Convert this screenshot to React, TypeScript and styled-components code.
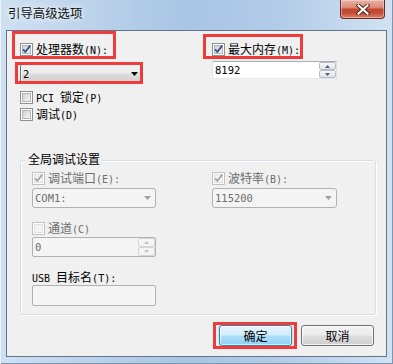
import React, { useId } from 'react';
import styled, { createGlobalStyle } from 'styled-components';

const Global = createGlobalStyle`
  html, body { margin: 0; padding: 0; background: #fff; }
  body { font-family: "Noto Sans CJK SC", "Noto Sans", sans-serif; font-size: 12px; line-height: 13px; color: #000; }
  *, *::before, *::after { box-sizing: border-box; }
`;

const Window = styled.div`
  width: 393px;
  height: 364px;
  display: flex;
  flex-direction: column;
  padding: 0 6px 7px 6px;
  background: linear-gradient(90deg, #cfe0f2 0%, #bcd3eb 22%, #a8c5e4 48%, #b3cce8 72%, #d2e2f3 100%);
  box-shadow: inset 1px 0 0 #eaf2fa, inset -1px 0 0 #7d95b0, inset 0 -1px 0 #7d95b0;
`;

const TitleBar = styled.div`
  height: 30px;
  flex: none;
  display: flex;
  align-items: flex-start;
`;

const TitleText = styled.div`
  margin: 6px 0 0 2px;
  font-size: 12.4px;
  line-height: 14px;
  color: #111;
  text-shadow: 0 0 6px rgba(255, 255, 255, 0.9), 0 0 10px rgba(255, 255, 255, 0.7);
`;

const CloseButton = styled.div`
  width: 45px;
  height: 19px;
  margin: 0 2px 0 auto;
  display: flex;
  align-items: center;
  justify-content: center;
  border: 1px solid #6e2b24;
  border-top: none;
  border-radius: 0 0 4px 4px;
  background: linear-gradient(#eab0a2 0%, #dc8f7e 40%, #c5492f 52%, #c44d35 72%, #dd8368 100%);
  box-shadow: inset 0 0 0 1px rgba(255, 255, 255, 0.35);
`;

const Client = styled.div`
  flex: 1;
  display: flex;
  flex-direction: column;
  border: 1px solid #62758b;
  background: #f0f0f0;
  padding: 12px 0 0 13px;
`;

const Columns = styled.div<{ $left: number }>`
  display: grid;
  grid-template-columns: ${(p) => p.$left}px 1fr;
  align-items: start;
`;

const Column = styled.div`
  display: flex;
  flex-direction: column;
  align-items: flex-start;
`;

const Spaced = styled.div<{ $mt: number }>`
  margin-top: ${(p) => p.$mt}px;
`;

const Marked = styled.div<{ $x: number; $y: number; $w: number; $h: number }>`
  position: relative;
  &::after {
    content: '';
    box-sizing: border-box;
    position: absolute;
    left: ${(p) => p.$x}px;
    top: ${(p) => p.$y}px;
    width: ${(p) => p.$w}px;
    height: ${(p) => p.$h}px;
    border: 3px solid #f03b3b;
    pointer-events: none;
  }
`;

const CheckRow = styled.label`
  display: flex;
  align-items: center;
  gap: 3px;
  height: 13px;
`;

const LabelText = styled.span<{ $disabled?: boolean }>`
  font-size: 12px;
  line-height: 13px;
  white-space: nowrap;
  color: ${(p) => (p.$disabled ? '#6d6d6d' : '#000')};
`;

const FieldLabel = styled.div`
  height: 13px;
  font-size: 12px;
  line-height: 13px;
  white-space: nowrap;
`;

const Latin = styled.span`
  font-family: "DejaVu Sans Mono", "Liberation Mono", monospace;
  font-size: 10px;
`;

const DropButton = styled.div`
  width: 123px;
  height: 21px;
  display: flex;
  align-items: center;
  justify-content: space-between;
  padding: 0 4px 0 2px;
  border: 1px solid #707070;
  border-radius: 3px;
  background: linear-gradient(#f3f3f3 0%, #ebebeb 48%, #dcdcdc 52%, #cfcfcf 100%);
  box-shadow: inset 0 0 0 1px rgba(255, 255, 255, 0.75);
`;

const DropDisabled = styled.div<{ $w: number }>`
  width: ${(p) => p.$w}px;
  height: 20px;
  display: flex;
  align-items: center;
  justify-content: space-between;
  padding: 0 4px 0 2px;
  border: 1px solid #adb2b5;
  border-radius: 3px;
  background: #f4f4f4;
`;

const Value = styled.span<{ $disabled?: boolean }>`
  font-family: "DejaVu Sans Mono", "Liberation Mono", monospace;
  font-size: 10.5px;
  line-height: 14px;
  color: ${(p) => (p.$disabled ? '#6d6d6d' : '#000')};
`;

const SpinBox = styled.div<{ $w: number; $h: number; $disabled?: boolean }>`
  width: ${(p) => p.$w}px;
  height: ${(p) => p.$h}px;
  display: flex;
  align-items: stretch;
  border: 1px solid;
  border-color: ${(p) => (p.$disabled ? '#adb2b5' : '#abadb3 #dbdfe6 #e3e9ef #e2e3ea')};
  border-radius: ${(p) => (p.$disabled ? '2px' : '0')};
  background: ${(p) => (p.$disabled ? '#f4f4f4' : '#fff')};
`;

const SpinValue = styled.div`
  flex: 1;
  display: flex;
  align-items: center;
  padding-left: 2px;
`;

const SpinButtons = styled.div`
  width: 17px;
  display: flex;
  flex-direction: column;
`;

const SpinBtn = styled.div<{ $disabled?: boolean }>`
  flex: 1;
  display: flex;
  align-items: center;
  justify-content: center;
  border: 1px solid ${(p) => (p.$disabled ? '#d6d6d6' : '#b7bcc4')};
  border-radius: 2px;
  background: ${(p) =>
    p.$disabled ? '#f4f4f4' : 'linear-gradient(#f7f7f7 0%, #ebedf0 50%, #dfe2e6 100%)'};
`;

const TextBox = styled.div`
  width: 124px;
  height: 21px;
  border: 1px solid #adb2b5;
  border-radius: 2px;
  background: #f4f4f4;
`;

const GroupBox = styled.div`
  margin: 39px 10px 0 0;
  border: 1px solid #d5dfe5;
  border-radius: 3px;
  box-shadow: inset 1px 1px 0 #fff, 1px 1px 0 #fff;
  padding: 0 0 8px 0;
`;

const GroupTitle = styled.div`
  width: fit-content;
  margin: -9px 0 0 5px;
  padding: 0 2px;
  background: #f0f0f0;
  font-size: 12px;
  line-height: 14px;
`;

const GroupBody = styled.div`
  margin: 6px 0 0 11px;
`;

const ButtonRow = styled.div`
  margin-top: 10px;
  padding-right: 12px;
  display: flex;
  justify-content: flex-end;
  gap: 9px;
`;

const Button = styled.div<{ $primary?: boolean }>`
  width: 73px;
  height: 21px;
  display: flex;
  align-items: center;
  justify-content: center;
  font-size: 12px;
  border-radius: 3px;
  border: 1px solid ${(p) => (p.$primary ? '#3c7fb1' : '#707070')};
  background: ${(p) =>
    p.$primary
      ? 'linear-gradient(#e6f5fd 0%, #d0ecfb 48%, #ade0f8 52%, #8fd0f1 100%)'
      : 'linear-gradient(#f3f3f3 0%, #ebebeb 48%, #dddddd 52%, #cfcfcf 100%)'};
  box-shadow: ${(p) =>
    p.$primary
      ? 'inset 0 0 0 1px rgba(255,255,255,0.6), 0 0 2px rgba(60,160,220,0.6)'
      : 'inset 0 0 0 1px rgba(255,255,255,0.75)'};
`;

function CheckBox({ checked, disabled }: { checked?: boolean; disabled?: boolean }) {
  const id = useId().replace(/:/g, '');
  return (
    <svg width="13" height="13" viewBox="0 0 13 13" style={{ flex: 'none' }}>
      <defs>
        <linearGradient id={`g${id}`} x1="0" y1="0" x2="1" y2="1">
          <stop offset="0" stopColor={disabled ? '#f2f2f2' : '#cdd0d4'} />
          <stop offset="1" stopColor={disabled ? '#f6f6f6' : '#f7f7f7'} />
        </linearGradient>
      </defs>
      <rect x="0.5" y="0.5" width="12" height="12" fill="#fff" stroke={disabled ? '#c2c2c2' : '#8e8f8f'} />
      <rect x="2.5" y="2.5" width="8" height="8" fill={`url(#g${id})`} stroke={disabled ? '#e0e0e0' : '#b0b4ba'} />
      {checked && (
        <path
          d="M3 6.3 L5.4 8.8 L10.2 2.6"
          fill="none"
          stroke={disabled ? '#a8a8a8' : '#3b5590'}
          strokeWidth="1.9"
          strokeLinejoin="miter"
        />
      )}
    </svg>
  );
}

function Arrow({ color }: { color: string }) {
  return (
    <svg width="7" height="4" viewBox="0 0 7 4">
      <path d="M0 0 H7 L3.5 4 Z" fill={color} />
    </svg>
  );
}

function SmallArrow({ up, color }: { up?: boolean; color: string }) {
  return (
    <svg width="5" height="3" viewBox="0 0 5 3">
      <path d={up ? 'M0 3 H5 L2.5 0 Z' : 'M0 0 H5 L2.5 3 Z'} fill={color} />
    </svg>
  );
}

function CloseIcon() {
  return (
    <svg width="14" height="11" viewBox="0 0 14 11">
      <path d="M2.5 1.5 L11.5 9.5 M11.5 1.5 L2.5 9.5" stroke="#4a1d18" strokeWidth="4" strokeLinecap="square" />
      <path d="M2.5 1.5 L11.5 9.5 M11.5 1.5 L2.5 9.5" stroke="#fff" strokeWidth="2.2" strokeLinecap="square" />
    </svg>
  );
}

function Spin({ value, w, h, disabled }: { value: string; w: number; h: number; disabled?: boolean }) {
  const c = disabled ? '#c2c2c2' : '#4d6185';
  return (
    <SpinBox $w={w} $h={h} $disabled={disabled}>
      <SpinValue>
        <Value $disabled={disabled}>{value}</Value>
      </SpinValue>
      <SpinButtons>
        <SpinBtn $disabled={disabled}>
          <SmallArrow up color={c} />
        </SpinBtn>
        <SpinBtn $disabled={disabled}>
          <SmallArrow color={c} />
        </SpinBtn>
      </SpinButtons>
    </SpinBox>
  );
}

function Check({
  text,
  mnemonic,
  checked,
  disabled,
}: {
  text: React.ReactNode;
  mnemonic: string;
  checked?: boolean;
  disabled?: boolean;
}) {
  return (
    <CheckRow>
      <CheckBox checked={checked} disabled={disabled} />
      <LabelText $disabled={disabled}>
        {text}
        <Latin>{mnemonic}</Latin>
      </LabelText>
    </CheckRow>
  );
}

export default function App() {
  return (
    <>
      <Global />
      <Window>
        <TitleBar>
          <TitleText>引导高级选项</TitleText>
          <CloseButton>
            <CloseIcon />
          </CloseButton>
        </TitleBar>
        <Client>
          <Columns $left={192}>
            <Column>
              <Marked $x={-8} $y={-12} $w={104} $h={28}>
                <Check text="处理器数" mnemonic="(N):" checked />
              </Marked>
              <Spaced $mt={7}>
                <Marked $x={-5} $y={-1} $w={128} $h={22}>
                  <DropButton>
                    <Value>2</Value>
                    <Arrow color="#000" />
                  </DropButton>
                </Marked>
              </Spaced>
              <Spaced $mt={7}>
                <Check text={<><Latin>PCI </Latin>锁定</>} mnemonic="(P)" />
              </Spaced>
              <Spaced $mt={4}>
                <Check text="调试" mnemonic="(D)" />
              </Spaced>
            </Column>
            <Column>
              <Marked $x={-9} $y={-9} $w={100} $h={25}>
                <Check text="最大内存" mnemonic="(M):" checked />
              </Marked>
              <Spaced $mt={5}>
                <Spin value="8192" w={125} h={18} />
              </Spaced>
            </Column>
          </Columns>

          <GroupBox>
            <GroupTitle>全局调试设置</GroupTitle>
            <GroupBody>
              <Columns $left={180}>
                <Column>
                  <Check text="调试端口" mnemonic="(E):" checked disabled />
                  <Spaced $mt={3}>
                    <DropDisabled $w={124}>
                      <Value $disabled>COM1:</Value>
                      <Arrow color="#a0a0a0" />
                    </DropDisabled>
                  </Spaced>
                  <Spaced $mt={14}>
                    <Check text="通道" mnemonic="(C)" disabled />
                  </Spaced>
                  <Spaced $mt={2}>
                    <Spin value="0" w={124} h={20} disabled />
                  </Spaced>
                  <Spaced $mt={13}>
                    <FieldLabel>
                      <Latin>USB </Latin>目标名<Latin>(T):</Latin>
                    </FieldLabel>
                  </Spaced>
                  <Spaced $mt={2}>
                    <TextBox />
                  </Spaced>
                </Column>
                <Column>
                  <Check text="波特率" mnemonic="(B):" checked disabled />
                  <Spaced $mt={3}>
                    <DropDisabled $w={125}>
                      <Value $disabled>115200</Value>
                      <Arrow color="#a0a0a0" />
                    </DropDisabled>
                  </Spaced>
                </Column>
              </Columns>
            </GroupBody>
          </GroupBox>

          <ButtonRow>
            <Marked $x={-6} $y={-3} $w={84} $h={27}>
              <Button $primary>确定</Button>
            </Marked>
            <Button>取消</Button>
          </ButtonRow>
        </Client>
      </Window>
    </>
  );
}
